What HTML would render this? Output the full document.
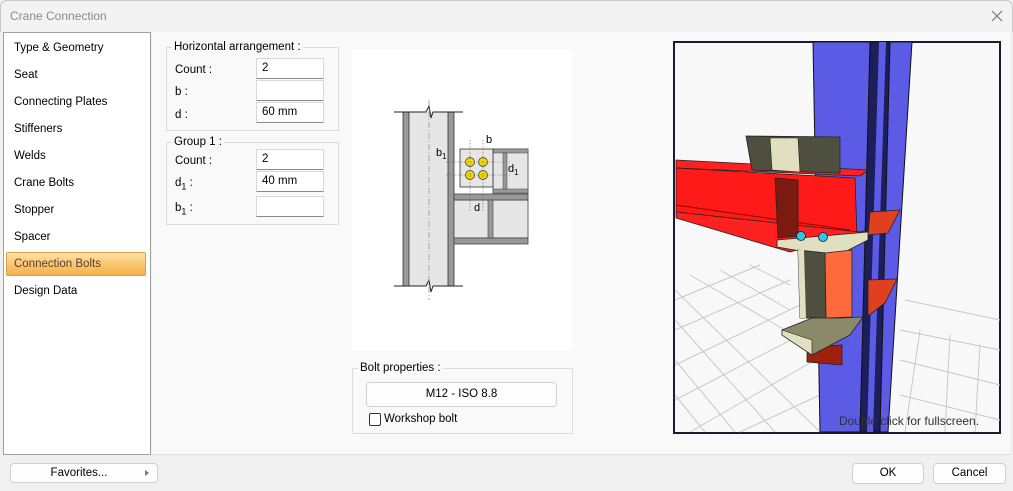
<!DOCTYPE html>
<html><head><meta charset="utf-8"><style>
*{margin:0;padding:0;box-sizing:border-box}
body{width:1013px;height:491px;background:#f0f0f0;font-family:"Liberation Sans",sans-serif;font-size:11.5px;color:#000;position:relative;overflow:hidden}
.a{position:absolute}
.title{left:0;top:0;width:1013px;height:32px;background:#f3f3f3;border:1px solid #c8c8c8;border-bottom:none;border-radius:7px 7px 0 0}
.list{left:3px;top:32px;width:148px;height:423px;background:#fff;border:1px solid #a0a0a0}
.list div{position:absolute;left:10px;font-size:11.5px}
.content{left:152px;top:32px;width:858px;height:423px;background:#f9f9f9;border-bottom:1px solid #e0e0e0}
.grp{border:1px solid #dcdcdc;}
.lg{background:#f9f9f9;padding:0 2px;font-size:11.5px}
.inp{background:#fff;border:1px solid #d9d9d9;border-bottom:1px solid #8a8a8a;height:21px;width:68px;left:256px;padding:3px 5px;font-size:11.5px}
.btn{background:#fdfdfd;border:1px solid #d0d0d0;border-radius:4px;text-align:center;font-size:11.5px}
</style></head><body>
<div class="a title"></div>
<div class="a" style="left:10px;top:9px;color:#8a8a8a;font-size:12px">Crane Connection</div>
<svg class="a" style="left:990px;top:9px" width="14" height="14"><path d="M2 2L12 12M12 2L2 12" stroke="#777" stroke-width="1.2"/></svg>
<div class="a list">
<div style="top:9px">Type &amp; Geometry</div>
<div style="top:36px">Seat</div>
<div style="top:63px">Connecting Plates</div>
<div style="top:90px">Stiffeners</div>
<div style="top:117px">Welds</div>
<div style="top:144px">Crane Bolts</div>
<div style="top:171px">Stopper</div>
<div style="top:198px">Spacer</div>
<div style="left:2px;top:219px;width:140px;height:24px;border:1px solid #d9a04a;border-radius:2px;background:linear-gradient(#fde2a8,#f9c46c 55%,#f7b04a)"></div>
<div style="top:225px;color:#5a4030">Connection Bolts</div>
<div style="top:252px">Design Data</div>
</div>
<div class="a content"></div>
<div class="a grp" style="left:166px;top:47px;width:173px;height:84px"></div>
<div class="a lg" style="left:172px;top:41px">Horizontal arrangement :</div>
<div class="a" style="left:175px;top:64px">Count :</div>
<div class="a" style="left:175px;top:86px">b :</div>
<div class="a" style="left:175px;top:109px">d :</div>
<div class="a inp" style="top:58px">2</div>
<div class="a inp" style="top:80px"></div>
<div class="a inp" style="top:102px">60 mm</div>
<div class="a grp" style="left:166px;top:142px;width:173px;height:83px"></div>
<div class="a lg" style="left:172px;top:136px">Group 1 :</div>
<div class="a" style="left:175px;top:155px">Count :</div>
<div class="a" style="left:175px;top:177px">d<sub style="font-size:9px">1</sub> :</div>
<div class="a" style="left:175px;top:202px">b<sub style="font-size:9px">1</sub> :</div>
<div class="a inp" style="top:149px">2</div>
<div class="a inp" style="top:171px">40 mm</div>
<div class="a inp" style="top:196px"></div>
<svg class="a" style="left:352px;top:50px" width="220" height="300">
<rect width="220" height="300" fill="#fff"/>
<g transform="translate(-352,-50)">
<rect x="409" y="112" width="39" height="174" fill="#e6e6e6"/>
<rect x="403" y="112" width="6" height="174" fill="#999" stroke="#333" stroke-width=".8"/>
<rect x="448" y="112" width="6" height="174" fill="#999" stroke="#333" stroke-width=".8"/>
<path d="M394 112H426L429 106L431 118L433 112H463M394 286H426L429 280L431 292L433 286H463" stroke="#222" fill="none"/>
<path d="M429 100V300" stroke="#999" stroke-dasharray="6 2 1 2" stroke-width=".8"/>
<rect x="454" y="200" width="74" height="38" fill="#e6e6e6" stroke="#444" stroke-width=".8"/>
<rect x="454" y="194" width="74" height="6" fill="#999" stroke="#444" stroke-width=".8"/>
<rect x="454" y="238" width="74" height="6" fill="#999" stroke="#444" stroke-width=".8"/>
<rect x="488" y="200" width="5" height="38" fill="#999" stroke="#444" stroke-width=".6"/>
<rect x="493" y="149" width="35" height="44" fill="#e6e6e6" stroke="#444" stroke-width=".8"/>
<rect x="493" y="149" width="35" height="4" fill="#999" stroke="#444" stroke-width=".5"/>
<rect x="493" y="189" width="35" height="4" fill="#999" stroke="#444" stroke-width=".5"/>
<rect x="503" y="153" width="4" height="36" fill="#999" stroke="#444" stroke-width=".5"/>
<rect x="460" y="149" width="33" height="38" fill="#e6e6e6" stroke="#333" stroke-width=".8"/>
<g fill="#f5d800" stroke="#333" stroke-width=".7">
<circle cx="470" cy="162" r="4.5"/><circle cx="483" cy="162" r="4.5"/><circle cx="470" cy="175" r="4.5"/><circle cx="483" cy="175" r="4.5"/></g>
<path d="M446 162H510M446 175H510M470 140V212M483 140V212" stroke="#666" stroke-dasharray="1.5 1.5" stroke-width=".6"/>
<text x="486" y="143" font-size="11" font-family="Liberation Sans">b</text>
<text x="436" y="156" font-size="11" font-family="Liberation Sans">b<tspan font-size="8" dy="3">1</tspan></text>
<text x="508" y="172" font-size="11" font-family="Liberation Sans">d<tspan font-size="8" dy="3">1</tspan></text>
<text x="474" y="211" font-size="11" font-family="Liberation Sans">d</text>
</g></svg>
<div class="a grp" style="left:352px;top:368px;width:221px;height:66px"></div>
<div class="a lg" style="left:358px;top:362px">Bolt properties :</div>
<div class="a btn" style="left:366px;top:382px;width:191px;height:25px;line-height:23px">M12 - ISO 8.8</div>
<div class="a" style="left:369px;top:413px;width:12px;height:13px;border:1px solid #333;border-radius:2px;background:#fff"></div>
<div class="a" style="left:384px;top:413px">Workshop bolt</div>
<svg class="a" style="left:673px;top:41px" width="328" height="393">
<rect x="1" y="1" width="326" height="391" fill="#f8f8f8" stroke="#1a1a30" stroke-width="2"/>
<g transform="translate(-673,-41)" stroke-linejoin="round">
<g stroke="#c8c8c8" fill="none" stroke-width="1">
<path d="M675 300L760 265M675 330L790 280M675 365L800 305M675 400L810 330M690 432L815 360M740 432L820 395M675 290L820 432M690 275L785 330M720 270L790 310M750 265L790 285M675 320L775 432M675 360L735 432M675 395L705 432"/>
<path d="M900 330L1000 350M900 360L1000 385M900 395L1000 420M905 300L1000 320M920 330L905 432M950 335L945 432M980 345L975 432"/>
</g>
<polygon points="813,42 912,42 888,432 820,432" fill="#5b5be6" stroke="#111" stroke-width="1"/>
<polygon points="870,42 890,42 880,432 860,432" fill="#1c1f5a" stroke="#111"/>
<polygon points="879,42 886,42 873,432 867,432" fill="#5b5be6"/>
<polygon points="870,212 900,210 888,233 868,235" fill="#e04020" stroke="#222" stroke-width=".8"/>
<polygon points="868,280 897,279 885,303 868,316" fill="#e04020" stroke="#222" stroke-width=".8"/>
<polygon points="676,160 868,170 860,176 676,168" fill="#ff2020" stroke="#222" stroke-width=".8"/>
<polygon points="676,168 855,178 857,236 676,212" fill="#ff1a1a" stroke="#222" stroke-width=".8"/>
<path d="M676 205L850 230" stroke="#900" stroke-width="1"/>
<polygon points="676,212 860,232 868,230 790,252 676,218" fill="#ff2020" stroke="#222" stroke-width=".8"/>
<polygon points="775,178 798,180 798,236 778,238" fill="#7a1a10" stroke="#222" stroke-width=".8"/>
<polygon points="746,136 840,137 840,173 752,170" fill="#4f4f40" stroke="#222" stroke-width=".8"/>
<polygon points="770,138 798,138 800,172 772,170" fill="#e0dfc0" stroke="#222" stroke-width=".6"/>
<polygon points="777,240 868,232 868,240 835,257 777,247" fill="#e0dfc0" stroke="#222" stroke-width=".8"/>
<polygon points="798,250 827,253 826,318 800,318" fill="#4f4f40" stroke="#222" stroke-width=".8"/>
<polygon points="798,250 804,250 806,318 800,318" fill="#e0dfc0"/>
<polygon points="825,253 852,250 852,317 826,318" fill="#ff6a3a" stroke="#222" stroke-width=".8"/>
<polygon points="807,347 842,345 842,365 807,362" fill="#a02010" stroke="#222" stroke-width=".8"/>
<polygon points="782,330 812,318 840,318 863,317 850,335 812,355 782,335" fill="#8a8a6a" stroke="#222" stroke-width=".8"/>
<polygon points="782,330 812,340 812,355 782,335" fill="#e0dfc0" stroke="#222" stroke-width=".6"/>
<circle cx="801" cy="236" r="4.5" fill="#30c8e0" stroke="#124" stroke-width=".8"/>
<circle cx="823" cy="237" r="4.5" fill="#30c8e0" stroke="#124" stroke-width=".8"/>
</g>
<text x="166" y="384" font-size="12" fill="#333" font-family="Liberation Sans">Double click for fullscreen.</text>
</svg>
<div class="a btn" style="left:10px;top:463px;width:148px;height:20px;line-height:18px;padding-right:10px">Favorites...</div>
<div class="a" style="left:145px;top:470px;width:0;height:0;border-left:4px solid #777;border-top:3.5px solid transparent;border-bottom:3.5px solid transparent"></div>
<div class="a btn" style="left:852px;top:463px;width:72px;height:21px;line-height:19px">OK</div>
<div class="a btn" style="left:933px;top:463px;width:73px;height:21px;line-height:19px">Cancel</div>
</body></html>
